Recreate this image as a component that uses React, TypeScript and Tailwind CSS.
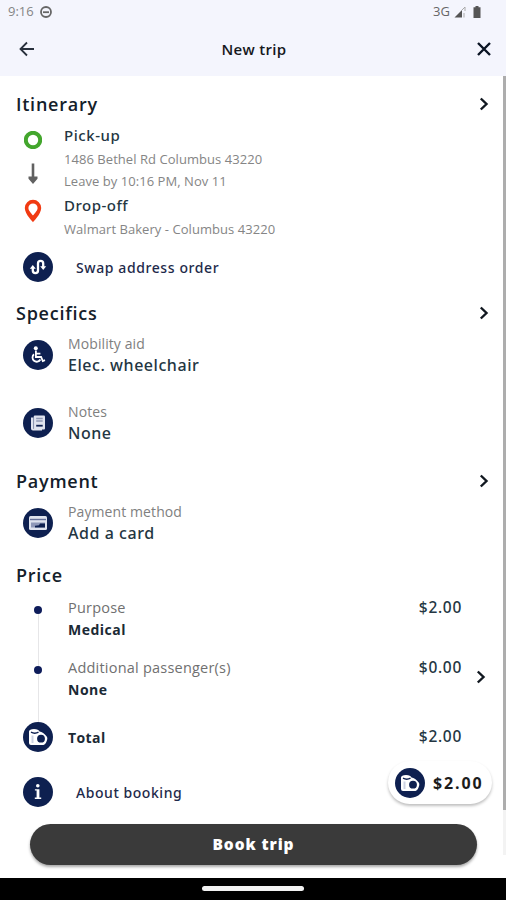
import React from 'react';

const SwapIcon = () => (
  <svg width="20" height="20" viewBox="0 0 20 20" fill="none" stroke="white" strokeWidth="2.300">
    <path d="M4.800 10.500v3a2.600 2.600 0 0 0 5.200 0v-7a2.600 2.600 0 0 1 5.200 0v4" />
    <path d="M1.800 11.800 4.800 8l3 3.800zM12.200 9.200l3 3.800 3-3.800z" fill="white" stroke="none" />
  </svg>
);

const WheelchairIcon = () => (
  <svg width="20" height="20" viewBox="0 0 20 20" fill="none" stroke="white" strokeWidth="1.800">
    <circle cx="7.800" cy="3.300" r="2" fill="white" stroke="none" />
    <path d="M7.900 5.500v6.500h5.200l1.700 4 2.200-.8M8 8.600h4.400" />
    <path d="M6 9.300a4.200 4.200 0 1 0 6.400 5.200" />
  </svg>
);

const NotesIcon = () => (
  <svg width="18" height="18" viewBox="0 0 18 18">
    <path d="M2 3.500h2.500v11.300H13V16.500H4a2 2 0 0 1-2-2z" fill="#dfe3ee" />
    <rect x="4.800" y="1.500" width="11.200" height="14" rx="1" fill="#dfe3ee" />
    <path d="M4.600 3.500v11" stroke="#8f98b3" strokeWidth="0.700" />
    <path d="M7.200 4.500h6.500M7.200 7h6.500" stroke="#8f98b3" strokeWidth="1.300" />
    <path d="M7.200 11.700h6.500" stroke="#0e2050" strokeWidth="1.800" />
  </svg>
);

const CardIcon = () => (
  <svg width="20" height="16" viewBox="0 0 20 16">
    <rect x="1" y="1" width="18" height="14" rx="1.500" fill="#dfe3ee" />
    <path d="M2 4.500h16" stroke="#66719a" strokeWidth="1.400" />
    <path d="M3 7.500h14v5H3z" fill="#8f98b8" />
    <path d="M7 12.500v-1.800l4-.4 1-1.800h5v4z" fill="#0e2050" />
  </svg>
);

const CoinsIcon = () => (
  <svg width="20" height="18" viewBox="0 0 20 18">
    <path d="M1 3.500C1 2 3 1 6 1s5 1 5.500 2.500c2.500.3 5 2 7 4.800.8 1.200 1 2 .7 3.200-.6 2.500-1.700 5-3.700 5.500H3a2 2 0 0 1-2-2z" fill="white" />
    <path d="M3 4.200c2 1 5.500 1 7.500 0" stroke="#0e2050" strokeWidth="1.500" fill="none" />
    <path d="M4.500 7.500V15" stroke="#ccd2e2" strokeWidth="2" />
    <circle cx="13" cy="10.700" r="3.900" fill="#0e2050" />
  </svg>
);

const InfoIcon = () => (
  <svg width="10" height="18" viewBox="0 0 10 18" fill="white">
    <circle cx="4.800" cy="2.700" r="1.800" />
    <path d="M1.900 6.200h4.500v8.400h1.800V16H1.800v-1.400h1.800V7.600H1.900z" />
  </svg>
);

const Chevron = () => (
  <svg width="10" height="14" viewBox="0 0 10 14" fill="none" stroke="#111820" strokeWidth="2.400">
    <path d="m1.800 1.500 5.700 5.500-5.700 5.500" />
  </svg>
);

const Badge = ({ children }: { children: React.ReactNode }) => (
  <div className="relative flex h-[30px] w-[30px] shrink-0 items-center justify-center rounded-full bg-[#0e2050]">{children}</div>
);

const SectionHeading = ({ title, arrow = true }: { title: string; arrow?: boolean }) => (
  <div className="flex h-8 items-center justify-between pr-[17px] pl-4">
    <h2 className="text-[18px] font-semibold tracking-[0.750px] text-[#14202a]">{title}</h2>
    {arrow && <Chevron />}
  </div>
);

const DetailRow = ({ icon, label, value }: { icon: React.ReactNode; label: string; value: string }) => (
  <div className="flex h-11 items-center gap-[15px] pl-[23px]">
    <Badge>{icon}</Badge>
    <div>
      <p className="text-[14px] leading-[22px] tracking-[0.1px] text-[#808080]">{label}</p>
      <p className="-mt-px mb-px font-['Noto_Sans',sans-serif] text-[16px] leading-[22px] font-medium tracking-[0.550px] text-[#243642]">{value}</p>
    </div>
  </div>
);

const PriceRow = ({ label, value, amount }: { label: string; value: string; amount: string }) => (
  <div className="flex h-[60px] pl-[34px]">
    <div className="mt-[11px] flex w-2 flex-col items-center">
      <div className="h-2 w-2 shrink-0 rounded-full bg-[#0e1c5a]" />
      <div className="-mb-[11px] w-px flex-1 bg-[#e6e6e8]" />
    </div>
    <div className="ml-[26px] flex-1">
      <p className="mt-0.5 text-[14.500px] leading-[22px] tracking-[0.220px] text-[#707070]">{label}</p>
      <p className="text-[14px] leading-[22px] font-bold tracking-[0.5px] text-[#1b2a35]">{value}</p>
    </div>
    <p className="mr-11 mt-px font-['Noto_Sans',sans-serif] text-[15.500px] leading-[22px] font-medium tracking-[0.7px] text-[#243642]">{amount}</p>
  </div>
);

const App: React.FC = () => {
  return (
    <div className="relative flex h-[900px] w-[506px] flex-col overflow-hidden bg-white font-['Open_Sans',sans-serif]">
      {/* Status bar and header */}
      <header className="h-[76px] shrink-0 bg-[#f4f5fd]">
        <div className="flex h-6 items-center pl-2 pr-[25px] text-[#666666]">
          <span className="text-[13px] text-[#858585]">9:16</span>
          <svg className="ml-1.5" width="12" height="12" viewBox="0 0 12 12" fill="none" stroke="#666666" strokeWidth="1.800">
            <circle cx="6" cy="6" r="5" />
            <path d="M3 6.200h6" />
          </svg>
          <span className="ml-auto text-[13px]">3G</span>
          <svg className="ml-1" width="12" height="12" viewBox="0 0 12 12">
            <path d="M0.500 11.500 8 4v7.500z" fill="#555555" />
            <path d="M8 4l3-3v4M10 7v4.500" stroke="#aaaaaa" fill="none" />
          </svg>
          <svg className="ml-[7px]" width="8" height="12" viewBox="0 0 8 12" fill="#555555">
            <path d="M2.500 0h3v1.200H7.500V12H.5V1.200h2z" />
          </svg>
        </div>
        <div className="flex h-[51px] items-center justify-between pl-[19px] pr-[15px]">
          <svg className="-mt-0.5" width="16" height="16" viewBox="0 0 16 16" fill="none" stroke="#28303c" strokeWidth="1.800">
            <path d="M15 8H1.500M8 1.500 1.500 8 8 14.500" />
          </svg>
          <h1 className="mr-1 text-[15px] font-semibold tracking-[0.3px] text-[#16181c]">New trip</h1>
          <svg className="-mt-0.5" width="14" height="14" viewBox="0 0 14 14" stroke="#0a1424" strokeWidth="2.400">
            <path d="m1 1 12 12M13 1 1 13" />
          </svg>
        </div>
      </header>

      <main className="flex h-[802px] flex-col pt-3">
        <SectionHeading title="Itinerary" />
        <div className="flex h-[132px] pl-6">
          <div className="flex w-[18px] flex-col items-center pt-[11px]">
            <svg width="18" height="18" viewBox="0 0 18 18" fill="none" stroke="#43a62d" strokeWidth="4">
              <circle cx="9" cy="9" r="7.200" />
            </svg>
            <svg className="mt-3.5" width="10" height="22" viewBox="0 0 10 22" fill="#616161">
              <path d="M3.700.5h2.600v13h3.200v2.300L5 21 .5 15.800v-2.300h3.200z" />
            </svg>
            <svg className="mt-[14px]" width="18" height="24" viewBox="0 0 18 24">
              <path fillRule="evenodd" fill="#f13a12" d="M9 .8a8.200 8.200 0 0 0-8.200 8.200C.8 15 9 23.200 9 23.200S17.200 15 17.200 9A8.200 8.200 0 0 0 9 .8zm0 3.700a4.600 4.600 0 0 1 4.600 4.600C13.600 12 9 16.500 9 16.500S4.400 12 4.400 9.100A4.600 4.600 0 0 1 9 4.500z" />
            </svg>
          </div>
          <div className="ml-[22px] pt-1 text-[#858585]">
            <p className="font-['Noto_Sans',sans-serif] text-[15px] leading-[23px] font-medium tracking-[0.550px] text-[#243642]">Pick-up</p>
            <p className="mt-px text-[13px] leading-[22px] tracking-[0.050px]">1486 Bethel Rd Columbus 43220</p>
            <p className="text-[13px] leading-[22px] tracking-[0.050px]">Leave by 10:16 PM, Nov 11</p>
            <p className="font-['Noto_Sans',sans-serif] text-[15px] leading-[26px] font-medium tracking-[0.5px] text-[#243642]">Drop-off</p>
            <p className="text-[13px] leading-[22px] tracking-[0.050px]">Walmart Bakery - Columbus 43220</p>
          </div>
        </div>
        <div className="flex h-[30px] items-center gap-[23px] pl-[23px]">
          <Badge><SwapIcon /></Badge>
          <span className="font-['Noto_Sans',sans-serif] text-[14px] font-medium tracking-[0.6px] text-[#1e2a4a]">Swap address order</span>
        </div>

        <div className="mt-[15px]"><SectionHeading title="Specifics" /></div>
        <div className="mt-1 flex flex-col gap-6">
          <DetailRow icon={<WheelchairIcon />} label="Mobility aid" value="Elec. wheelchair" />
          <DetailRow icon={<NotesIcon />} label="Notes" value="None" />
        </div>

        <div className="mt-5"><SectionHeading title="Payment" /></div>
        <div className="mt-1">
          <DetailRow icon={<CardIcon />} label="Payment method" value="Add a card" />
        </div>

        <div className="mt-[14px]"><SectionHeading title="Price" arrow={false} /></div>
        <div className="relative mt-1">
          <PriceRow label="Purpose" value="Medical" amount="$2.00" />
          <PriceRow label="Additional passenger(s)" value="None" amount="$0.00" />
          <div className="absolute top-[75px] right-5"><Chevron /></div>
        </div>
        <div className="mt-[7px] flex h-[30px] items-center pl-[23px]">
          <Badge><CoinsIcon /></Badge>
          <span className="ml-[15px] text-[14px] font-bold tracking-[0.4px] text-[#1b2a35]">Total</span>
          <span className="mr-11 ml-auto font-['Noto_Sans',sans-serif] text-[15.500px] font-medium tracking-[0.7px] text-[#243642]">$2.00</span>
        </div>
        <div className="mt-[25px] mb-px flex h-[30px] items-center gap-[23px] pl-[23px]">
          <Badge><InfoIcon /></Badge>
          <span className="font-['Noto_Sans',sans-serif] text-[14px] font-medium tracking-[0.550px] text-[#1e2a4a]">About booking</span>
        </div>
        <button className="mt-4 ml-[30px] h-[41px] w-[447px] shrink-0 rounded-full bg-[#3a3a3a] text-[15.500px] font-extrabold tracking-[0.9px] text-white shadow-[0_2px_3px_rgba(0,0,0,0.35)]">
          Book trip
        </button>
      </main>

      {/* Floating price */}
      <div className="absolute top-[761px] left-[388px] flex h-[43px] w-[104px] items-center rounded-full bg-white pl-[7px] shadow-[0_2px_3px_rgba(0,0,0,0.25)]">
        <Badge><CoinsIcon /></Badge>
        <span className="ml-2 text-[16px] font-bold tracking-[1.900px] text-[#1c1c1c]">$2.00</span>
      </div>

      {/* Scrollbar */}
      <div className="absolute top-[76px] right-0 h-[779px] w-[3px] bg-[#f3f3f3]">
        <div className="h-[734px] bg-[#adadad]" />
      </div>

      <footer className="flex h-[22px] shrink-0 justify-center bg-black pt-2">
        <div className="h-[5px] w-[102px] rounded-full bg-[#f2f2f2]" />
      </footer>
    </div>
  );
};

export default App;
